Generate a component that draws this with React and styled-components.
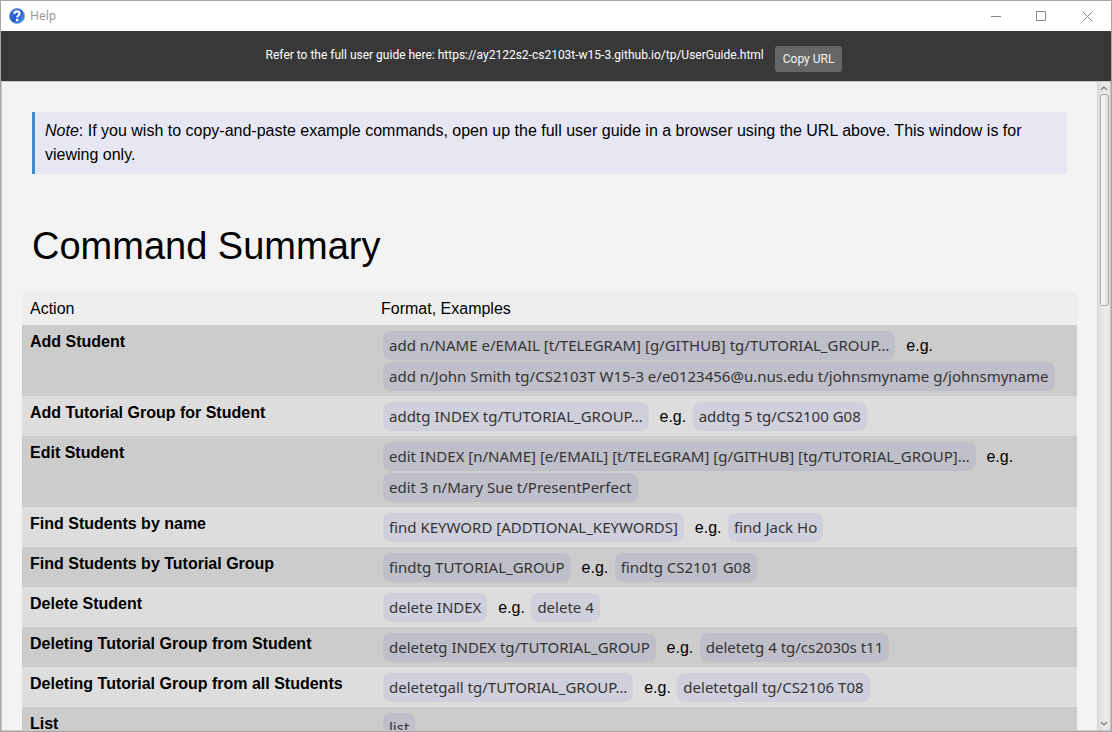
import React from "react";
import styled, { createGlobalStyle } from "styled-components";

const uiFont = '"Noto Sans", "Open Sans", sans-serif';
const barFont = 'Roboto, "Noto Sans", sans-serif';

const GlobalStyle = createGlobalStyle`
  * { box-sizing: border-box; }
  body { margin: 0; background: #f3f3f3; }
`;

const Window = styled.div`
  display: flex;
  flex-direction: column;
  height: 100vh;
  border: 1px solid #a6a6a6;
  background: #f3f3f3;
  color: #000;
  font: 16px/24px "Liberation Sans", Arial, sans-serif;
`;

const TitleBar = styled.header`
  display: flex;
  flex: none;
  align-items: center;
  height: 30px;
  padding-left: 8px;
  background: #fff;
`;

const Title = styled.span`
  flex: 1;
  padding-left: 5px;
  color: #999;
  font: 12px/16px ${uiFont};
`;

const WindowButton = styled.button`
  display: grid;
  place-items: center;
  width: 46px;
  height: 30px;
  padding: 0;
  border: 0;
  background: none;
  color: #888;
`;

const UrlBar = styled.section`
  display: flex;
  flex: none;
  justify-content: center;
  gap: 11px;
  height: 50px;
  padding: 15px 4px 0 0;
  background: #383838;
  color: #fff;
  font: 12px/18px ${barFont};
`;

const CopyButton = styled.button`
  height: 26px;
  padding: 0 8px;
  border: 0;
  border-radius: 3px;
  background: #666;
  color: #f3f3f3;
  font: 12px/26px ${barFont};
`;

const Viewport = styled.div`
  display: flex;
  flex: 1;
  min-height: 0;
  border: 1px solid #c8c8c8;
`;

const Content = styled.main`
  flex: 1;
  min-width: 0;
  overflow-y: auto;
  scrollbar-width: none;
  padding: 30px 20px 0;
`;

const Note = styled.p`
  margin: 0 10px;
  padding: 7px 10px;
  border-left: 3px solid #4488cc;
  background: #e7e7f4;
`;

const Heading = styled.h1`
  margin: 48px 10px 22px;
  font-size: 38px;
  line-height: 48px;
  font-weight: 400;
`;

const Table = styled.table`
  width: 100%;
  border-collapse: collapse;
  table-layout: fixed;
`;

const HeadCell = styled.th`
  width: ${(p) => (p.$first ? "351px" : "auto")};
  height: 33px;
  padding: 5px 8px 4px;
  background: #eee;
  font-weight: 400;
  text-align: left;
`;

const Row = styled.tr`
  --chip: #d0d0dc;
  background: #ddd;
  &:nth-child(odd) {
    --chip: #bfbfca;
    background: #ccc;
  }
`;

const ActionCell = styled.th`
  padding: 5px 8px 4px;
  text-align: left;
  vertical-align: top;
`;

const FormatCell = styled.td`
  padding: 5px 8px 4px;
  line-height: 31px;
  vertical-align: top;
`;

const Chip = styled.code`
  display: inline-block;
  margin: 1px 2px;
  padding: 0 6px;
  border-radius: 8px;
  background: var(--chip);
  color: #333;
  font: 15px/29px ${uiFont};
  white-space: nowrap;
  vertical-align: top;
`;

const ScrollTrack = styled.div`
  display: flex;
  flex: none;
  flex-direction: column;
  align-items: center;
  width: 13px;
  border-left: 1px solid #d4d4d4;
  background: linear-gradient(to right, #dedede, #ececec 60%, #e4e4e4);
  color: #888;
`;

const ScrollButton = styled.button`
  display: grid;
  place-items: center;
  flex: none;
  width: 12px;
  height: 12px;
  padding: 0;
  border: 0;
  background: none;
  color: inherit;
`;

const ScrollLane = styled.div`
  flex: 1;
  width: 9px;
`;

const ScrollThumb = styled.div`
  height: 34%;
  border: 1px solid #aaa;
  border-radius: 3px;
  background: linear-gradient(to right, #fafafa, #e0e0e0);
`;

const commands = [
  ["Add Student", "add n/NAME e/EMAIL [t/TELEGRAM] [g/GITHUB] tg/TUTORIAL_GROUP…", "add n/John Smith tg/CS2103T W15-3 e/e0123456@u.nus.edu t/johnsmyname g/johnsmyname"],
  ["Add Tutorial Group for Student", "addtg INDEX tg/TUTORIAL_GROUP…", "addtg 5 tg/CS2100 G08"],
  ["Edit Student", "edit INDEX [n/NAME] [e/EMAIL] [t/TELEGRAM] [g/GITHUB] [tg/TUTORIAL_GROUP]…", "edit 3 n/Mary Sue t/PresentPerfect"],
  ["Find Students by name", "find KEYWORD [ADDTIONAL_KEYWORDS]", "find Jack Ho"],
  ["Find Students by Tutorial Group", "findtg TUTORIAL_GROUP", "findtg CS2101 G08"],
  ["Delete Student", "delete INDEX", "delete 4"],
  ["Deleting Tutorial Group from Student", "deletetg INDEX tg/TUTORIAL_GROUP", "deletetg 4 tg/cs2030s t11"],
  ["Deleting Tutorial Group from all Students", "deletetgall tg/TUTORIAL_GROUP…", "deletetgall tg/CS2106 T08"],
  ["List", "list"],
];

const HelpIcon = () => (
  <svg width="16" height="16" viewBox="0 0 16 16" aria-hidden="true">
    <defs>
      <linearGradient id="ball" x1="0" y1="0" x2="1" y2="1">
        <stop offset="0" stopColor="#4a84e0" />
        <stop offset="0.5" stopColor="#2258cc" />
        <stop offset="1" stopColor="#5cb0f8" />
      </linearGradient>
    </defs>
    <circle cx="8" cy="8" r="7.6" fill="url(#ball)" stroke="#6c8fd0" strokeWidth="0.6" />
    <path d="M5.4 5.9C5.5 4.1 6.5 3.4 8 3.4c1.6 0 2.6.8 2.6 2.1 0 1.8-2.4 1.8-2.4 3.9" fill="none" stroke="#fff" strokeWidth="2.1" />
    <circle cx="8.1" cy="12" r="1.3" fill="#fff" />
  </svg>
);

const WindowIcon = ({ d }) => (
  <svg width="12" height="12" viewBox="0 0 12 12" fill="none" stroke="currentColor" aria-hidden="true">
    <path d={d} />
  </svg>
);

const Chevron = ({ d }) => (
  <svg width="8" height="6" viewBox="0 0 8 6" fill="none" stroke="currentColor" strokeWidth="1.5" aria-hidden="true">
    <path d={d} />
  </svg>
);

export default function App() {
  return (
    <Window>
      <GlobalStyle />
      <TitleBar>
        <HelpIcon />
        <Title>Help</Title>
        <WindowButton aria-label="Minimize"><WindowIcon d="M1 6.5H11" /></WindowButton>
        <WindowButton aria-label="Maximize"><WindowIcon d="M.5 1.5H9.5V10.5H.5Z" /></WindowButton>
        <WindowButton aria-label="Close"><WindowIcon d="M.5 1.5L10.5 11.5M10.5 1.5L.5 11.5" /></WindowButton>
      </TitleBar>
      <UrlBar>
        <span>Refer to the full user guide here: https://ay2122s2-cs2103t-w15-3.github.io/tp/UserGuide.html</span>
        <CopyButton>Copy URL</CopyButton>
      </UrlBar>
      <Viewport>
        <Content>
          <Note>
            <em>Note</em>: If you wish to copy-and-paste example commands, open up the full user guide in a
            browser using the URL above. This window is for viewing only.
          </Note>
          <Heading>Command Summary</Heading>
          <Table>
            <thead>
              <tr>
                <HeadCell $first scope="col">Action</HeadCell>
                <HeadCell scope="col">Format, Examples</HeadCell>
              </tr>
            </thead>
            <tbody>
              {commands.map(([action, format, example]) => (
                <Row key={action}>
                  <ActionCell scope="row">{action}</ActionCell>
                  <FormatCell>
                    <Chip>{format}</Chip>
                    {example && <>&nbsp; e.g. <Chip>{example}</Chip></>}
                  </FormatCell>
                </Row>
              ))}
            </tbody>
          </Table>
        </Content>
        <ScrollTrack>
          <ScrollButton aria-label="Scroll up"><Chevron d="M1 5L4 2L7 5" /></ScrollButton>
          <ScrollLane><ScrollThumb /></ScrollLane>
          <ScrollButton aria-label="Scroll down"><Chevron d="M1 1L4 4L7 1" /></ScrollButton>
        </ScrollTrack>
      </Viewport>
    </Window>
  );
}
